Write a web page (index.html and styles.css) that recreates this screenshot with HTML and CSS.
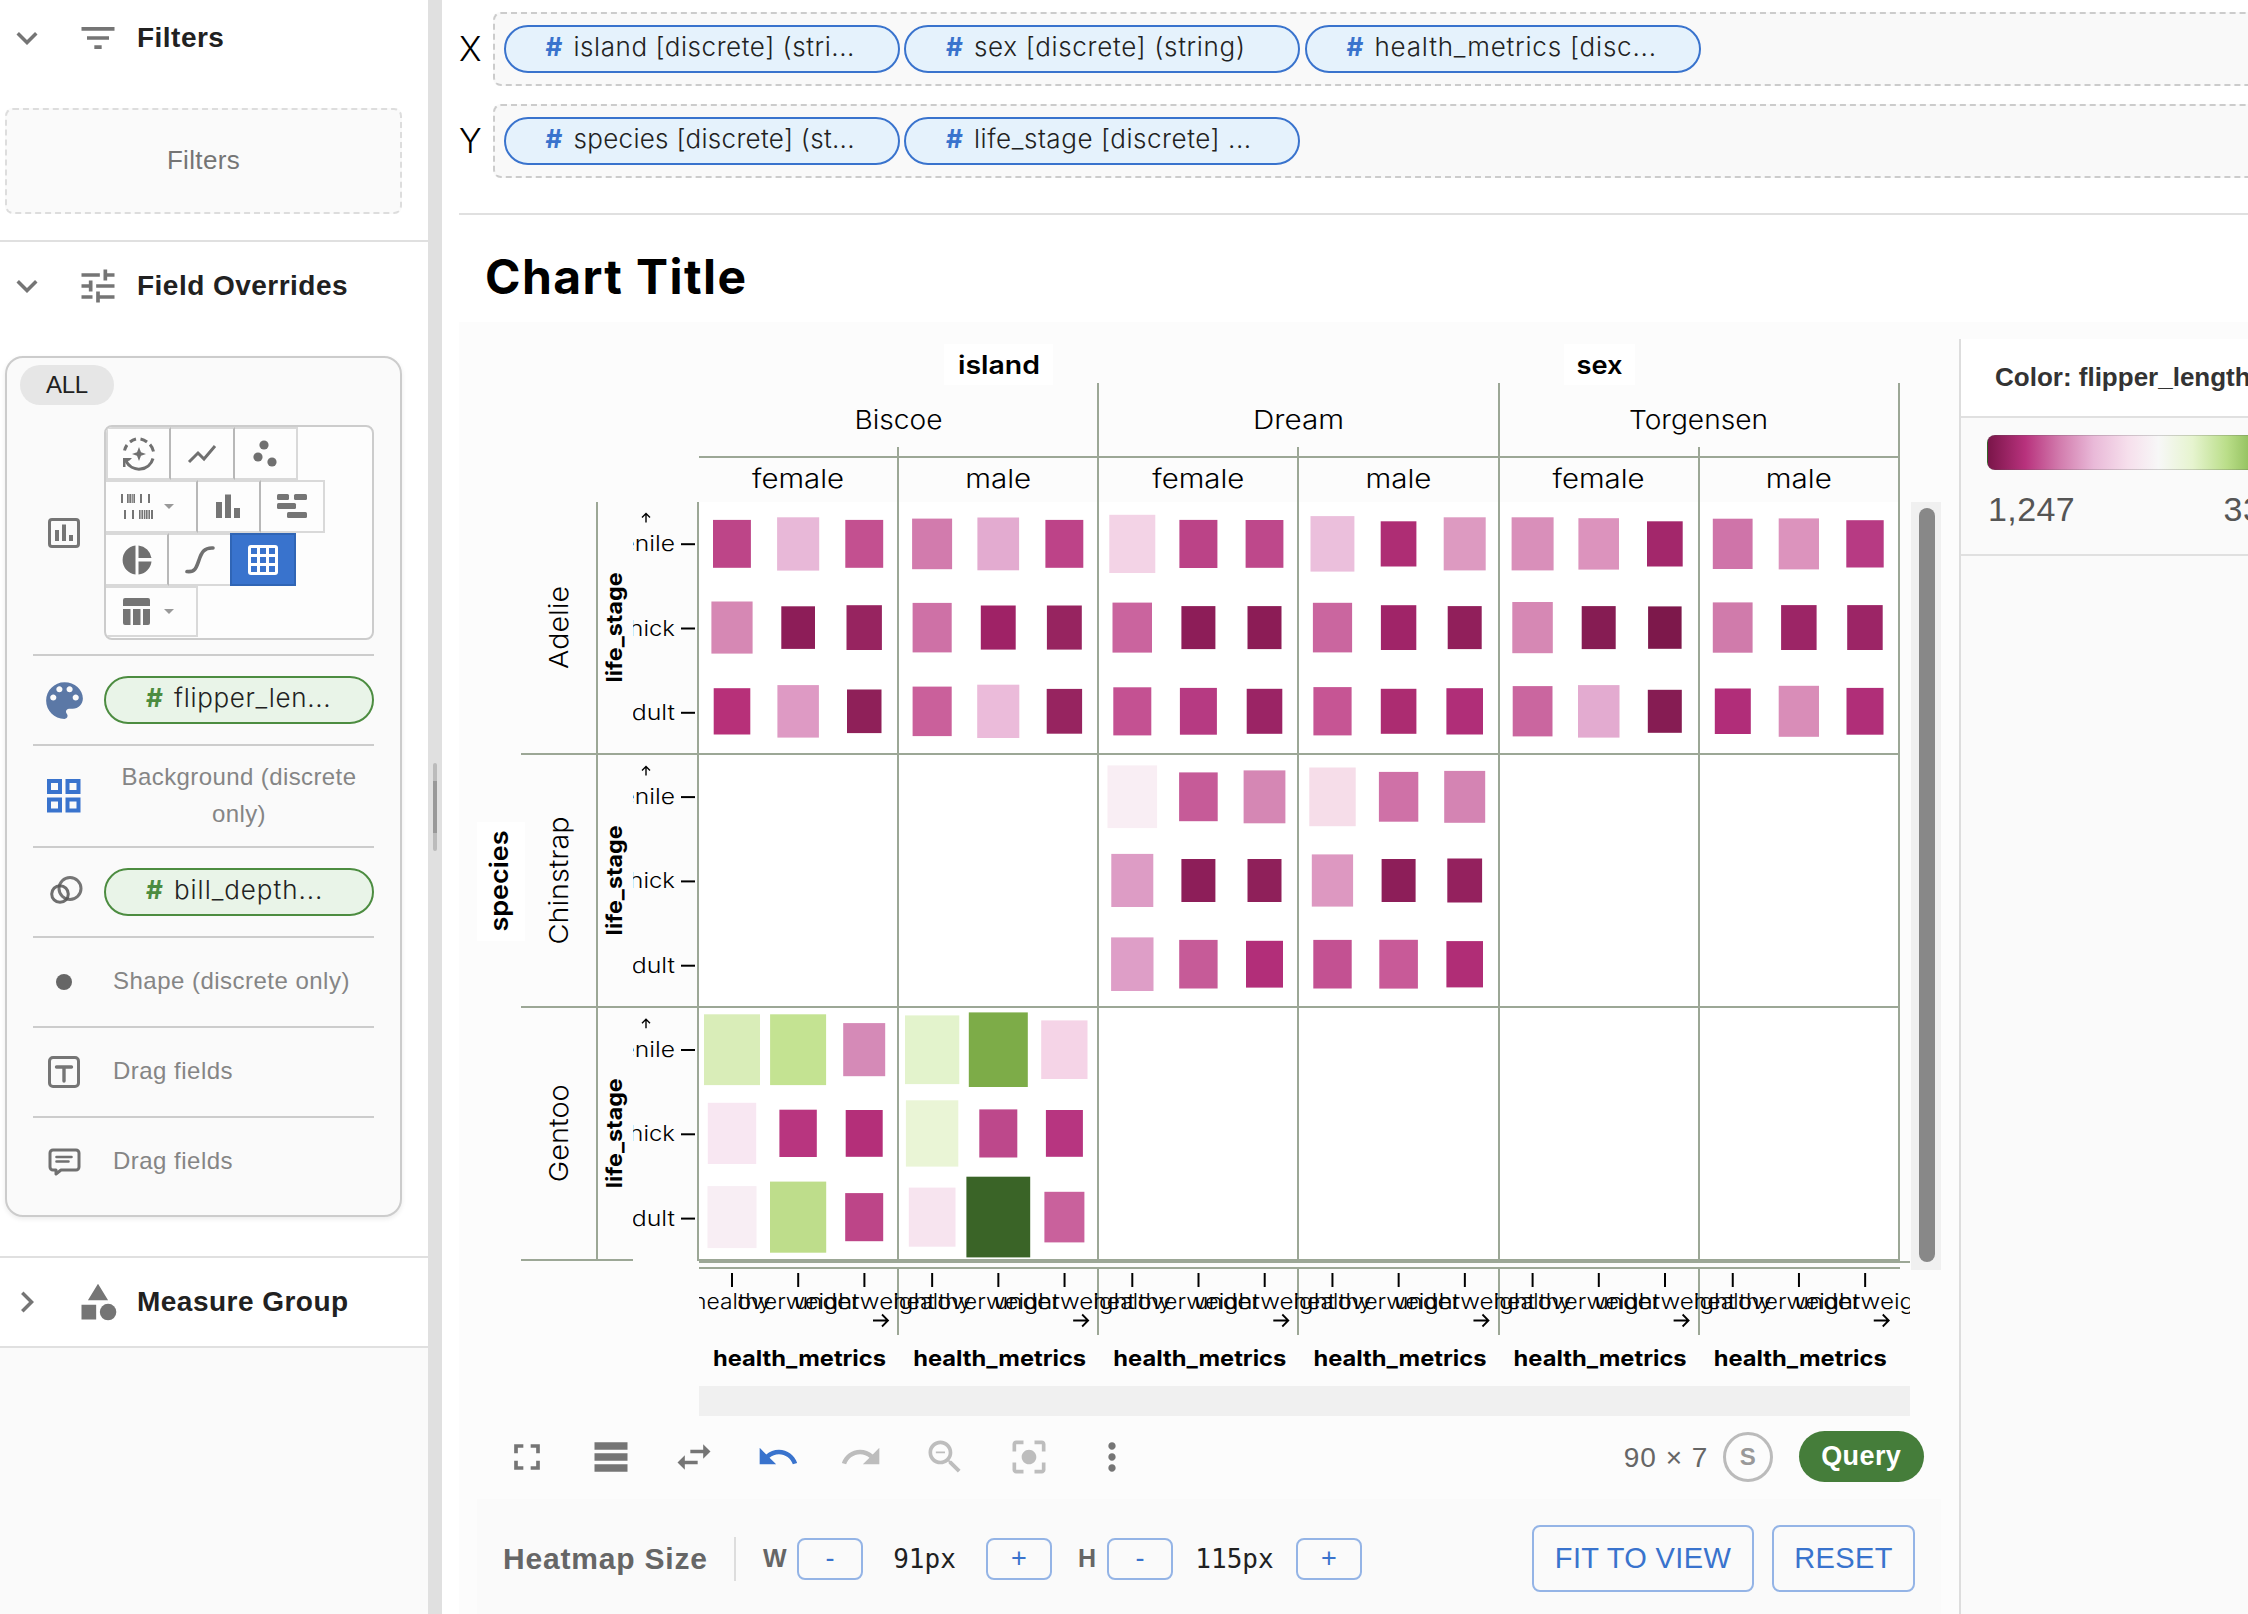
FILE: index.html
```html
<!DOCTYPE html>
<html lang="en">
<head>
<meta charset="utf-8">
<title>Chart Title</title>
<link rel="stylesheet" href="styles.css">
</head>
<body>
<div class="app">
  <aside class="sidebar">
    <section class="section section-filters">
      <header class="section-head">
        <svg class="chev" viewBox="0 0 24 24"><path d="M16.59 8.59 12 13.17 7.41 8.59 6 10l6 6 6-6z"/></svg>
        <svg class="head-icon" viewBox="0 0 24 24"><path d="M10 18h4v-2h-4v2zM3 6v2h18V6H3zm3 7h12v-2H6v2z"/></svg>
        <h2>Filters</h2>
      </header>
      <div class="filter-drop">Filters</div>
    </section>
    <section class="section section-overrides">
      <header class="section-head">
        <svg class="chev" viewBox="0 0 24 24"><path d="M16.59 8.59 12 13.17 7.41 8.59 6 10l6 6 6-6z"/></svg>
        <svg class="head-icon" viewBox="0 0 24 24"><path d="M3 17v2h6v-2H3zM3 5v2h10V5H3zm10 16v-2h8v-2h-8v-2h-2v6h2zM7 9v2H3v2h4v2h2V9H7zm14 4v-2H11v2h10zm-6-4h2V7h4V5h-4V3h-2v6z"/></svg>
        <h2>Field Overrides</h2>
      </header>
      <div class="card">
        <span class="chip">ALL</span>
        <div class="row row-type">
          <div class="row-icon">
            <svg width="32" height="30" viewBox="0 0 32 30"><rect x="1.5" y="1.5" width="29" height="27" rx="2.5" fill="none" stroke="#757575" stroke-width="3"/><path fill="#757575" d="M7 12h4v11H7zM14 6.500h4V23h-4zM21 17h4v6h-4z"/></svg>
          </div>
          <div class="types">
            <div class="type-row">
              <span class="type t65"><svg width="36" height="34" viewBox="0 0 36 34"><path d="M3.500 13.500A15 15 0 0 1 6 8M9 5a15 15 0 0 1 6-3M19.500 2a15 15 0 0 1 6.500 3M29 7.500a15 15 0 0 1 3.500 7" fill="none" stroke="#707070" stroke-width="3"/><path d="M32 21.500a14.500 14.500 0 0 1-27 2.500" fill="none" stroke="#707070" stroke-width="3"/><path fill="#707070" d="M2 21h9l-2.500 2.500L4.500 25v5H2zM18 10l2 5.200 5 1.800-5 1.800L18 24l-2-5.200L11 17l5-1.800z"/></svg></span>
              <span class="type t64"><svg width="30" height="20" viewBox="0 0 30 20"><path d="M2 18 11 9l6 6L28 2" fill="none" stroke="#707070" stroke-width="3"/></svg></span>
              <span class="type t63 last"><svg width="26" height="28" viewBox="0 0 26 28"><g fill="#707070"><circle cx="11" cy="5" r="4.600"/><circle cx="5" cy="17" r="4.600"/><circle cx="19" cy="22" r="4.600"/></g></svg></span>
            </div>
            <div class="type-row">
              <span class="type t92"><svg width="33" height="27" viewBox="0 0 33 27"><path fill="#757575" d="M0 1h2v9H0zM6 1h1.700v9H6zM8.300 1H10v9H8.300zM10.600 1h1.200v9h-1.200zM12.400 1h1.600v9h-1.600zM19 1h2v9h-2zM27 1h2v9h-2zM3 17h2v9H3zM11 17h2v9h-2zM18 17h1.600v9H18zM20.400 17H22v9h-1.600zM22.800 17h1.600v9h-1.600zM25 17h1.600v9H25zM27.400 17H29v9h-1.600zM30 17h2v9h-2z"/></svg><i class="caret"></i></span>
              <span class="type t63"><svg width="25" height="25" viewBox="0 0 25 25"><path fill="#757575" d="M0 8h6v16H0zM9 .500h6V24H9zM18 14h6v10h-6z"/></svg></span>
              <span class="type t64 last"><svg width="30" height="25" viewBox="0 0 30 25"><g fill="#757575"><rect y="0" width="12" height="6" rx="1.500"/><rect x="17" width="13" height="6" rx="1.500"/><rect y="9" width="19" height="6" rx="1.500"/><rect x="10" y="18" width="20" height="6" rx="1.500"/></g></svg></span>
            </div>
            <div class="type-row">
              <span class="type t63"><svg width="30" height="30" viewBox="0 0 30 30"><path fill="#707070" d="M13.500.500v29a14.600 14.600 0 0 1 0-29zM16.500.500A14.600 14.600 0 0 1 29.500 13h-13zM16.500 16.500h13a14.600 14.600 0 0 1-13 13z"/></svg></span>
              <span class="type t61"><svg width="30" height="28" viewBox="0 0 30 28"><path d="M2 25.500c8 1 9.500-4 12-11.500S19 1.500 28 2" fill="none" stroke="#707070" stroke-width="3.600" stroke-linecap="round"/></svg></span>
              <span class="type t66 active"><svg width="30" height="30" viewBox="0 0 30 30"><rect width="30" height="30" rx="3" fill="#fff"/><path fill="#3973cd" d="M3 3h6v6H3zM12 3h6v6h-6zM21 3h6v6h-6zM3 12h6v6H3zM12 12h6v6h-6zM21 12h6v6h-6zM3 21h6v6H3zM12 21h6v6h-6zM21 21h6v6h-6z"/></svg></span>
            </div>
            <div class="type-row short">
              <span class="type t92 last"><svg width="33" height="27" viewBox="0 0 33 27"><path fill="#757575" d="M4 0h23a2 2 0 0 1 2 2v6H2V2a2 2 0 0 1 2-2zM2 11h7.500v16H4a2 2 0 0 1-2-2zM12 11h7.500v16H12zM22 11h7v14a2 2 0 0 1-2 2h-5z"/></svg><i class="caret"></i></span>
            </div>
          </div>
        </div>
        <div class="row">
          <div class="row-icon"><svg width="49" height="49" viewBox="0 0 24 24" fill="#5b78a6"><path d="M12 3c-4.970 0-9 4.030-9 9s4.030 9 9 9c.830 0 1.500-.670 1.500-1.500 0-.390-.150-.740-.390-1.010-.230-.260-.380-.610-.380-.990 0-.830.670-1.500 1.500-1.500H16c2.760 0 5-2.240 5-5 0-4.420-4.030-8-9-8zm-5.500 9c-.830 0-1.500-.670-1.500-1.500S5.670 9 6.500 9 8 9.670 8 10.500 7.330 12 6.500 12zm3-4C8.670 8 8 7.330 8 6.500S8.670 5 9.500 5s1.500.670 1.500 1.500S10.330 8 9.500 8zm5 0c-.830 0-1.500-.670-1.500-1.500S13.670 5 14.500 5s1.500.670 1.500 1.500S15.330 8 14.500 8zm3 4c-.830 0-1.500-.670-1.500-1.500S16.670 9 17.500 9s1.500.670 1.500 1.500-.670 1.500-1.500 1.500z"/></svg></div>
          <div class="pill green"><b>#</b><span class="ls-6">flipper_len...</span></div>
        </div>
        <div class="row row-tall">
          <div class="row-icon"><svg width="34" height="34" viewBox="0 0 34 34"><path fill="none" stroke="#3973cd" stroke-width="4" d="M2 2h11v11H2zM20.500 2h11v11h-11zM2 20.500h11v11H2zM20.500 20.500h11v11h-11z"/></svg></div>
          <div class="hint centered">Background (discrete only)</div>
        </div>
        <div class="row">
          <div class="row-icon"><svg width="38" height="32" viewBox="0 0 38 32"><g fill="none" stroke="#757575" stroke-width="3"><circle cx="25" cy="12.500" r="11"/><circle cx="15" cy="18" r="8.300" stroke="#555" stroke-opacity=".85"/></g></svg></div>
          <div class="pill green"><b>#</b><span class="ls-9">bill_depth...</span></div>
        </div>
        <div class="row">
          <div class="row-icon"><svg width="16" height="16" viewBox="0 0 16 16"><circle cx="8" cy="8" r="8" fill="#666"/></svg></div>
          <div class="hint">Shape (discrete only)</div>
        </div>
        <div class="row">
          <div class="row-icon"><svg width="32" height="32" viewBox="0 0 32 32" fill="none" stroke="#757575" stroke-width="3"><rect x="1.500" y="1.500" width="29" height="29" rx="3.500"/><path d="M8.500 11h15M16 11v14" stroke-linecap="round" stroke-width="3.400"/></svg></div>
          <div class="hint">Drag fields</div>
        </div>
        <div class="row">
          <div class="row-icon"><svg width="33" height="29" viewBox="0 0 33 29" fill="none" stroke="#707070" stroke-width="3" stroke-linejoin="round"><path d="M5 2h23a3 3 0 0 1 3 3v14a3 3 0 0 1-3 3H13l-5 4v-4H5a3 3 0 0 1-3-3V5a3 3 0 0 1 3-3z"/><path d="M8.500 9h15M8.500 13.500h12" stroke-linecap="round" stroke-width="2.600"/></svg></div>
          <div class="hint">Drag fields</div>
        </div>
      </div>
    </section>
    <section class="section section-measure">
      <header class="section-head">
        <svg class="chev" viewBox="0 0 24 24"><path d="M10 6 8.590 7.410 13.170 12l-4.580 4.590L10 18l6-6z"/></svg>
        <svg class="head-icon" viewBox="0 0 24 24"><path d="m12 2-5.500 9h11zM3 13.500h8v8H3z"/><circle cx="17.500" cy="17.500" r="4.500"/></svg>
        <h2>Measure Group</h2>
      </header>
    </section>
  </aside>
  <div class="splitter"><i></i></div>
  <main class="main">
    <div class="shelves">
      <div class="shelf"><label>X</label>
        <div class="drop">
          <div class="pill blue"><b>#</b><span class="ls-5">island [discrete] (stri...</span></div>
          <div class="pill blue"><b>#</b><span class="ls-6">sex [discrete] (string)</span></div>
          <div class="pill blue"><b>#</b><span class="ls-8">health_metrics [disc...</span></div>
        </div>
      </div>
      <div class="shelf"><label>Y</label>
        <div class="drop">
          <div class="pill blue"><b>#</b><span class="ls-3">species [discrete] (st...</span></div>
          <div class="pill blue"><b>#</b><span class="ls-5">life_stage [discrete] ...</span></div>
        </div>
      </div>
    </div>
    <h1>Chart Title</h1>
    <div class="view">
      <div class="chart-col">
        <svg class="chart" id="chart" width="1501" height="1096" viewBox="459 322 1501 1096"></svg>
        <div class="toolbar">
          <svg viewBox="0 0 24 24"><path d="M7 14H5v5h5v-2H7v-3zm-2-4h2V7h3V5H5v5zm12 7h-3v2h5v-5h-2v3zM14 5v2h3v3h2V5h-5z"/></svg>
          <svg viewBox="0 0 24 24"><path d="M3 4h18v4H3zM3 10h18v4H3zM3 16h18v4H3z"/></svg>
          <svg viewBox="0 0 24 24"><path d="M6.990 11 3 15l3.990 4v-3H14v-2H6.990v-3zM21 9l-3.990-4v3H10v2h7.010v3L21 9z"/></svg>
          <svg viewBox="0 0 24 24" class="on"><path d="M12.500 8c-2.650 0-5.050.990-6.900 2.600L2 7v9h9l-3.620-3.620c1.390-1.160 3.160-1.880 5.120-1.880 3.540 0 6.550 2.310 7.600 5.500l2.370-.780C21.080 11.030 17.150 8 12.500 8z"/></svg>
          <svg viewBox="0 0 24 24" class="off"><path d="M18.400 10.600C16.550 8.990 14.150 8 11.500 8c-4.650 0-8.580 3.030-9.960 7.220L3.900 16c1.050-3.190 4.050-5.500 7.600-5.500 1.950 0 3.730.720 5.120 1.880L13 16h9V7l-3.600 3.600z"/></svg>
          <svg viewBox="0 0 24 24" class="off"><path d="M15.500 14h-.790l-.280-.270C15.410 12.590 16 11.110 16 9.500 16 5.910 13.090 3 9.500 3S3 5.910 3 9.500 5.910 16 9.500 16c1.610 0 3.090-.590 4.230-1.570l.270.280v.790l5 4.990L20.490 19l-4.990-5zm-6 0C7.010 14 5 11.990 5 9.500S7.010 5 9.500 5 14 7.010 14 9.500 11.990 14 9.500 14zM7 9h5v1H7z"/></svg>
          <svg viewBox="0 0 24 24" class="off"><path d="M12 8c-2.210 0-4 1.790-4 4s1.790 4 4 4 4-1.790 4-4-1.790-4-4-4zm-7 7H3v4c0 1.100.900 2 2 2h4v-2H5v-4zM5 5h4V3H5c-1.100 0-2 .900-2 2v4h2V5zm14-2h-4v2h4v4h2V5c0-1.100-.900-2-2-2zm0 16h-4v2h4c1.100 0 2-.900 2-2v-4h-2v4z"/></svg>
          <svg viewBox="0 0 24 24"><path d="M12 8c1.100 0 2-.900 2-2s-.900-2-2-2-2 .900-2 2 .900 2 2 2zm0 2c-1.100 0-2 .900-2 2s.900 2 2 2 2-.900 2-2-.900-2-2-2zm0 6c-1.100 0-2 .900-2 2s.900 2 2 2 2-.900 2-2-.900-2-2-2z"/></svg>
          <span class="dims">90 × 7</span>
          <span class="badge">S</span>
          <button class="query">Query</button>
        </div>
        <div class="sizer">
          <span class="sizer-title">Heatmap Size</span>
          <i class="vbar"></i>
          <b class="axis">W</b><button class="step">-</button><span class="val">91px</span><button class="step">+</button>
          <b class="axis axis-h">H</b><button class="step">-</button><span class="val">115px</span><button class="step">+</button>
          <button class="act fit">FIT TO VIEW</button><button class="act reset">RESET</button>
        </div>
      </div>
      <div class="legend">
        <div class="legend-head">Color: flipper_length</div>
        <div class="legend-body">
          <div class="ramp"></div>
          <div class="range"><span>1,247</span><span>33,000</span></div>
        </div>
      </div>
    </div>
  </main>
</div>
<script src="chart.js"></script>
</body>
</html>
```
FILE: styles.css
```css
* { box-sizing: border-box; }
body { margin: 0; width: 2248px; height: 1614px; overflow: hidden; background: #fff; font-family: "Liberation Sans", Arial, sans-serif; color: #212121; }
h1, h2 { margin: 0; }
button { font: inherit; padding: 0; margin: 0; }
.app { display: flex; height: 1614px; width: 2248px; }

.sidebar { width: 428px; flex: none; background: #fafafa; }
.section { background: #fff; border-bottom: 2px solid #e0e0e0; }
.section-head { display: flex; align-items: center; padding-left: 6px; height: 44px; }
.section-head svg { fill: #757575; flex: none; }
.chev { width: 42px; height: 42px; margin-right: 28px; }
.head-icon { width: 44px; height: 44px; }
.section-head h2 { margin-left: 17px; font-size: 28px; line-height: 32px; letter-spacing: .48px; }
.section-filters { height: 242px; padding-top: 16px; }
.filter-drop { margin: 48px 0 0 5px; width: 397px; height: 106px; border: 2px dashed #ddd; border-radius: 8px; background: #fafafa; color: #757575; font-size: 26px; letter-spacing: .35px; display: flex; align-items: center; justify-content: center; padding-bottom: 2px; }
.section-overrides { height: 1016px; padding-top: 22px; }
.section-measure { height: 90px; padding-top: 22px; }

.card { margin: 48px 0 0 5px; width: 397px; height: 861px; border: 2px solid #ccc; border-radius: 18px; background: #fafafa; box-shadow: 0 2px 5px rgba(0,0,0,.08); padding: 7px 26px 0; }
.chip { display: flex; align-items: center; justify-content: center; width: 94px; height: 40px; margin-left: -13px; border-radius: 20px; background: #e6e6e6; font-size: 24px; letter-spacing: -.3px; }
.row { display: flex; align-items: center; height: 90px; border-top: 2px solid #ccc; }
.row-type { height: 249px; border-top: 0; align-items: flex-start; padding-top: 20px; }
.row-type .row-icon { height: 215px; }
.row-tall { height: 102px; }
.row-icon { width: 62px; margin-right: 9px; flex: none; display: flex; align-items: center; justify-content: center; }
.hint { color: #858585; font-size: 24px; line-height: 37px; letter-spacing: .48px; padding-left: 9px; margin-top: -4px; }
.hint.centered { text-align: center; width: 270px; padding: 0 10px; margin-top: -2px; letter-spacing: .4px; }

.types { width: 270px; height: 215px; border: 2px solid #ccc; border-radius: 8px; background: #fdfdfd; overflow: hidden; }
.type-row { display: flex; height: 53px; }
.type-row.short { height: 51px; }
.type { border: 2px solid #d9d9d9; border-left: 0; border-right-color: #b8b8b8; display: flex; align-items: center; justify-content: center; }
.type.last { border-right-color: #d9d9d9; }
.type-row:first-child .type:first-child { border-left: 2px solid #d9d9d9; }
.t61 { width: 61px; border-right: 0; }
.t63 { width: 63px; }
.t64 { width: 64px; }
.t65 { width: 65px; }
.t66 { width: 66px; }
.t92 { width: 92px; justify-content: flex-start; padding-left: 15px; }
.type.active { background: #3973cd; border: 2px solid #3065b5; }
.caret { border: 5px solid transparent; border-top-color: #999; border-bottom: 0; margin-left: 10px; }

.pill { height: 48px; border: 2px solid; border-radius: 24px; display: flex; align-items: center; padding: 0 0 6px 40px; font-family: Inter, "Open Sans", sans-serif; font-size: 26px; color: #222; white-space: nowrap; font-weight: 300; }
.pill b { width: 28px; flex: none; font-weight: 700; }
.ls-3 { letter-spacing: .3px; }
.ls-5 { letter-spacing: .55px; }
.ls-6 { letter-spacing: .68px; }
.ls-8 { letter-spacing: .8px; }
.ls-9 { letter-spacing: .95px; }
.pill.green { width: 270px; border-color: #4c8c40; background: #e9f4e8; }
.pill.green b { color: #4c8c40; }
.pill.blue { width: 396px; border-color: #3973cd; background: #e5f2fc; flex: none; }
.pill.blue b { color: #3973cd; }

.splitter { width: 14px; flex: none; background: #e0e0e0; padding: 763px 0 0 5px; }
.splitter i { display: block; width: 4px; height: 88px; border-radius: 2px; background: linear-gradient(#bbb 18px, #999 18px, #999 70px, #bbb 70px); }

.main { flex: 1; min-width: 0; }
.shelves { margin-left: 17px; height: 215px; padding-top: 12px; border-bottom: 2px solid #e0e0e0; }
.shelf { display: flex; height: 74px; margin-bottom: 18px; }
.shelf label { width: 34px; flex: none; font-family: Inter, "Open Sans", sans-serif; font-size: 34px; font-weight: 300; line-height: 74px; color: #000; }
.drop { flex: none; width: 1800px; border: 2px dashed #ccc; border-radius: 8px; background: #f9f9f9; display: flex; align-items: center; gap: 4.500px; padding: 0 0 0 8.500px; }
h1 { height: 107px; padding: 33px 0 0 43px; font-family: Inter, "Open Sans", sans-serif; font-size: 48px; line-height: 57px; font-weight: 700; color: #000; letter-spacing: 1.400px; }

.view { margin-left: 17px; background: #fcfcfc; display: flex; height: 1292px; }
.chart-col { width: 1500px; flex: none; }
.chart { display: block; font-family: Inter, "Open Sans", sans-serif; }
.grid { stroke: #9ca796; stroke-width: 2; fill: none; }
.tick { stroke: #000; stroke-width: 2; fill: none; }

.toolbar { display: flex; align-items: center; height: 81px; padding: 0 0 4px 46px; }
.toolbar svg { width: 44px; height: 44px; margin-right: 39.600px; fill: #757575; flex: none; }
.toolbar svg.on { fill: #3973cd; }
.toolbar svg.off { fill: #bdbdbd; }
.dims { margin-left: 450px; width: 99px; font-size: 28px; color: #666; letter-spacing: 1px; position: relative; top: 1px; }
.badge { width: 50px; height: 50px; border: 3px solid #bbb; border-radius: 50%; color: #999; font-weight: 700; font-size: 24px; display: flex; align-items: center; justify-content: center; margin-right: 26px; flex: none; }
.query { width: 125px; height: 51px; border: 0; border-radius: 26px; background: #457d3a; color: #fff; font-size: 27px; font-weight: 700; letter-spacing: .4px; flex: none; }

.sizer { margin-left: 18px; width: 1464px; height: 115px; background: #fafafa; display: flex; align-items: center; padding: 4px 0 0 26px; }
.sizer-title { font-size: 30px; font-weight: 700; color: #666; letter-spacing: .8px; width: 231px; flex: none; }
.vbar { width: 2px; height: 44px; background: #ddd; margin-right: 27px; }
.axis { font-size: 25px; color: #666; width: 34px; }
.axis-h { margin-left: 26px; width: 29px; }
.step { width: 66px; height: 42px; border: 2px solid #94b4e6; border-radius: 8px; background: transparent; color: #3973cd; font-size: 27px; }
.val { width: 123px; text-align: center; font-family: "DejaVu Sans Mono", monospace; font-size: 26px; }
.act { height: 67px; border: 2px solid #94b4e6; border-radius: 8px; background: transparent; color: #3973cd; font-size: 29px; letter-spacing: .35px; }
.fit { width: 222px; margin: 0 18px 0 170px; }
.reset { width: 143px; }

.legend { margin-top: 17px; width: 400px; flex: none; border-left: 2px solid #ddd; background: #fafafa; }
.legend-head { height: 79px; background: #fff; border-bottom: 2px solid #e0e0e0; padding-left: 34px; font-size: 26px; font-weight: 700; line-height: 76px; color: #333; white-space: nowrap; }
.legend-body { height: 138px; border-bottom: 2px solid #e0e0e0; padding: 17px 0 0 26px; }
.ramp { width: 343px; height: 35px; border-radius: 8px; border: 1px solid rgba(90,90,90,.25); background: linear-gradient(90deg, #7a1549, #b8327d 11%, #d27bad 21%, #e9b9d8 31%, #f6dfec 41%, #f7f7f7 50%, #e6f4cf 60%, #bade89 70%, #82b44c 80%, #4d8a2a 90%, #276419); }
.range { display: flex; justify-content: space-between; width: 343px; padding: 19px 0 0 1px; font-size: 34px; line-height: 40px; color: #555; letter-spacing: .4px; }
```
FILE: chart.js
```js
// Heatmap data: [block column, block row] -> 3x3 cells, top to bottom, as "width colour".
const X0 = 698, PX = 200.15, Y0 = 502, PY = 252.9;
const cells = {
  '0,0': '37.9 bd4588,42.1 e8b8d8,37.9 c35090,41.2 d688b4,33.7 8d1d58,35.4 972460,36.6 b73079,41.5 de9ac4,34.5 8f2059',
  '1,0': '40 d27bad,41.7 e3abd0,37.9 bd4388,39.1 ce71a6,34.9 9f2266,34.9 972460,39.1 ca609b,42.1 ebbbda,35.4 972460',
  '2,0': '46 f3d3e6,38 bb4387,37.8 be488b,39.5 ca649e,34 8d1d58,34 8c1c56,38 c45192,37 b63a82,35.6 9b2465',
  '3,0': '43.9 ebbfdc,35.7 ae2d74,42 dd9ac1,39.2 ca669f,35.4 a02468,34 911f5b,38.2 c65594,35.6 ac2c71,36.6 b02e78',
  '4,0': '42 d98fba,40.6 dc93bd,35.7 a3276b,40.5 d688b4,34 861c53,33.5 7d184b,39.8 ca669f,41.5 e3abd0,34 861c53',
  '5,0': '39.8 cf74a9,40.3 dc93bd,37.4 b73a83,39.8 d07bab,35.5 9c2566,35.5 9c2566,36 b12d79,40.3 d98db8,37 b02e78',
  '2,1': '49.6 f9eef4,38.6 c65b98,41.8 d587b4,42 dd9cc5,34 8d1e59,34 8f205a,42.4 de9ec7,38.4 c65b98,37 b22e79',
  '3,1': '46.4 f6dde9,39.4 cf71a7,41 d484b3,41.3 dd98c1,34 8d1e59,34.8 94215e,38.4 c35192,38.6 c85a98,36.6 b02d76',
  '0,2': '56 d9edb8,56 c4e392,42 d58ab7,48.4 f8e7f2,37.4 b8357f,37 b42f79,49 f8eef4,56.2 bedd8b,38 bd4588',
  '1,2': '54.3 e3f3cc,59 7dac48,46.3 f5d4e7,52.4 eaf5d6,38 bd488b,37 b73580,46.7 f7e4ef,63.8 3a6427,40 c9619c'
};
const out = [];
const rect = (x, y, w, h, f, r = 0) => out.push(`<rect x="${x}" y="${y}" width="${w}" height="${h}" fill="${f}" rx="${r}"/>`);
const line = (x1, y1, x2, y2, c = 'grid', sw = '') => out.push(`<path class="${c}" d="M${x1} ${y1}L${x2} ${y2}"${sw ? ` style="stroke-width:${sw}"` : ''}/>`);
const text = (s, x, y, len, size, weight = 400, anchor = 'middle', extra = '') =>
  out.push(`<text x="${x}" y="${y}" font-size="${size}" font-weight="${weight}" text-anchor="${anchor}" textLength="${len}" lengthAdjust="spacingAndGlyphs" ${extra}>${s}</text>`);
const vtext = (s, x, y, len, size, weight) => text(s, 0, 0, len, size, weight, 'middle', `transform="translate(${x} ${y}) rotate(-90)"`);

out.push('<defs><clipPath id="cy"><rect x="633" y="500" width="70" height="770"/></clipPath><clipPath id="cx"><rect x="699" y="1268" width="1211" height="80"/></clipPath></defs>');

// plot background, cells
rect(698, 502, 1201, 758, '#fff');
for (const key in cells) {
  const [c, r] = key.split(',').map(Number);
  cells[key].split(',').forEach((v, i) => {
    const [w, f] = v.split(' ');
    const h = w * 1.265;
    const cx = 732 + (i % 3) * 66.1 + c * PX;
    const cy = 543.9 + Math.floor(i / 3) * 83.7 + r * PY;
    rect((cx - w / 2).toFixed(1), (cy - h / 2).toFixed(1), w, h.toFixed(1), '#' + f);
  });
}

// column headings
rect(944, 344, 109, 41, '#fff');
rect(1564, 344, 71, 41, '#fff');
text('island', 999, 374, 82, 25, 600);
text('sex', 1599.5, 374, 46, 25, 600);
text('Biscoe', 898.5, 429, 88, 26, 300);
text('Dream', 1298.5, 429, 91, 26, 300);
text('Torgensen', 1698.5, 429, 139, 26, 300);
for (let i = 0; i < 6; i++) {
  const cx = X0 + PX * i + 100;
  if (i % 2) text('male', cx, 488, 66, 26, 300);
  else text('female', cx, 488, 92, 26, 300);
}

// row headings
rect(477, 822, 48, 119, '#fff');
vtext('species', 507.5, 881, 101, 25, 600);
[['Adelie', 83], ['Chinstrap', 128], ['Gentoo', 98]].forEach(([s, l], r) => {
  const cy = 627.5 + PY * r;
  vtext(s, 568, cy, l, 26, 300);
  vtext('life_stage', 621.5, cy, 110, 22, 700);
  out.push(`<path class="tick" style="stroke-width:1.400" d="M646 ${cy - 105}v-9M642 ${cy - 110}l4-4 4 4"/>`);
  [['juvenile', 88], ['chick', 59], ['adult', 57]].forEach(([t, w], k) => {
    const y = 544.2 + 84.3 * k + PY * r;
    line(681, y, 695, y, 'tick');
    text(t, 675, y + 7, w, 22, 300, 'end', 'clip-path="url(#cy)"');
  });
});

// grid lines
line(699, 457, 1899.5, 457);
for (let i = 0; i < 7; i++) {
  const x = Math.round(X0 + PX * i);
  const top = i === 0 ? 502 : i % 2 ? 447 : 383;
  line(x, top, x, 1261);
  if (i > 0 && i < 6) line(x, 1268, x, 1335);
}
line(597, 502, 597, 1260);
line(521, 754, 1899.5, 754);
line(521, 1007, 1899.5, 1007);
line(521, 1260, 633, 1260);
line(697, 1260, 1899.5, 1260);
line(699, 1262, 1910, 1262);
line(699, 1268, 1900, 1268);

// bottom axis
for (let i = 0; i < 6; i++) {
  const x = 732 + PX * i;
  [['healthy', 78], ['overweight', 122], ['underweight', 141]].forEach(([t, w], k) => {
    const tx = x + 66.2 * k;
    line(tx, 1273, tx, 1287, 'tick');
    text(t, tx, 1309, w, 22, 300, 'middle');
    out[out.length - 1] = `<g clip-path="url(#cx)">${out[out.length - 1]}</g>`;
  });
  out.push(`<path class="tick" style="stroke-width:1.800" d="M${x + 141} 1320.500h15m-6-6l6 6-6 6"/>`);
  text('health_metrics', x + 67.5, 1366, 173, 22, 700);
}

// scrollbars
rect(699, 1386, 1211, 30, '#f0f0f0');
rect(1911, 502, 30, 768, '#f0f0f0');
rect(1919, 508, 16, 754, '#888', 8);
document.getElementById('chart').innerHTML = out.join('');
```
